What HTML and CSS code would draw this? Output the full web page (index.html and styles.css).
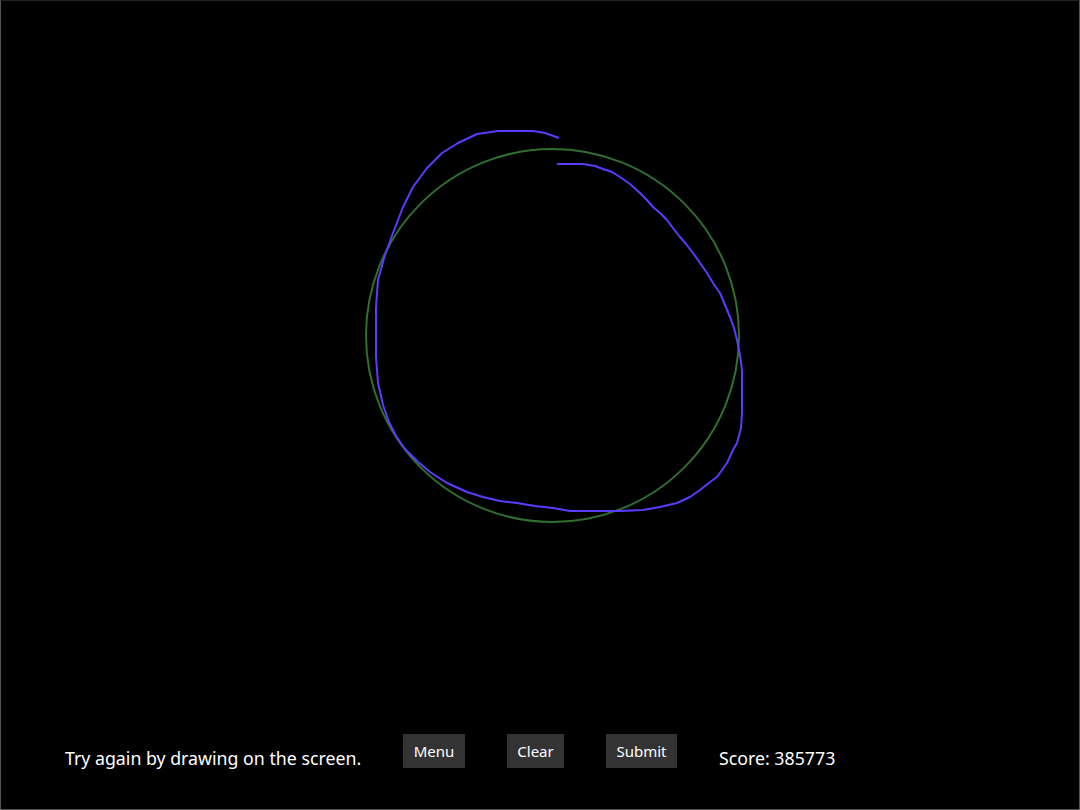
FILE: index.html
```html
<!DOCTYPE html>
<html lang="en">

<head>
  <meta charset="UTF-8">
  <meta name="viewport" content="width=device-width, initial-scale=1.0">
  <title>Circle</title>
  <link rel="stylesheet" href="styles.css">
</head>

<body>
  <div class="frame">
    <div class="board">
      <svg class="canvas" width="1078" height="733" viewBox="1 1 1078 733">
        <!-- target circle -->
        <circle class="target" cx="552.5" cy="335.5" r="186.5" />
        <!-- user stroke -->
        <polyline class="stroke" points="559,138 545,133 533,131 515,131 498,131 477,134 458,143 442,153 427,168 413,187 403,207 393,233 385,255 378,280 376,307 376,332 376,357 378,383 383,405 389,422 396,436 405,449 417,461 430,472 447,483 467,492 483,497 500,501 517,503 535,506 553,508 570,511 600,511 620,511 643,510 660,507 677,503 690,497 700,490 710,482 717,477 727,463 733,450 737,443 741,428 742,413 742,395 742,370 740,355 737,340 734,328 730,317 725,305 720,293 713,283 707,273 700,263 693,253 686,244 680,237 673,228 667,220 660,213 653,207 646,199 640,193 630,184 620,177 612,172 603,169 595,166 583,164 570,164 557,164" />
      </svg>
    </div>
    <div class="toolbar">
      <span class="label hint">Try again by drawing on the screen.</span>
      <button class="btn menu">Menu</button>
      <button class="btn clear">Clear</button>
      <button class="btn submit">Submit</button>
      <span class="label">Score: 385773</span>
    </div>
  </div>
</body>

</html>
```

FILE: styles.css
```css
* {
  margin: 0;
  padding: 0;
  box-sizing: border-box;
}

body {
  background-color: #000;
  font-family: "Noto Sans", "Open Sans", sans-serif;
  color: #fff;
}

.frame {
  width: 1080px;
  height: 810px;
  border: 1px solid #555;
  border-top-color: #222;
  display: flex;
  flex-direction: column;
}

.board {
  height: 733px;
}

.canvas {
  display: block;
}

.target {
  fill: none;
  stroke: #2f6f2f;
  stroke-width: 2;
}

.stroke {
  fill: none;
  stroke: #5a3cff;
  stroke-width: 2;
  stroke-linejoin: round;
}

.toolbar {
  display: flex;
  align-items: flex-start;
  gap: 42px;
  padding-left: 64px;
}

.label {
  font-size: 17.75px;
  line-height: 24px;
  padding-top: 12px;
  white-space: nowrap;
}

.hint {
  width: 296px;
}

.btn {
  height: 34px;
  padding: 0;
  border: none;
  background-color: #333;
  color: #fff;
  font-family: inherit;
  font-size: 15px;
}

.menu {
  width: 62px;
}

.clear {
  width: 57px;
}

.submit {
  width: 71px;
}
```
